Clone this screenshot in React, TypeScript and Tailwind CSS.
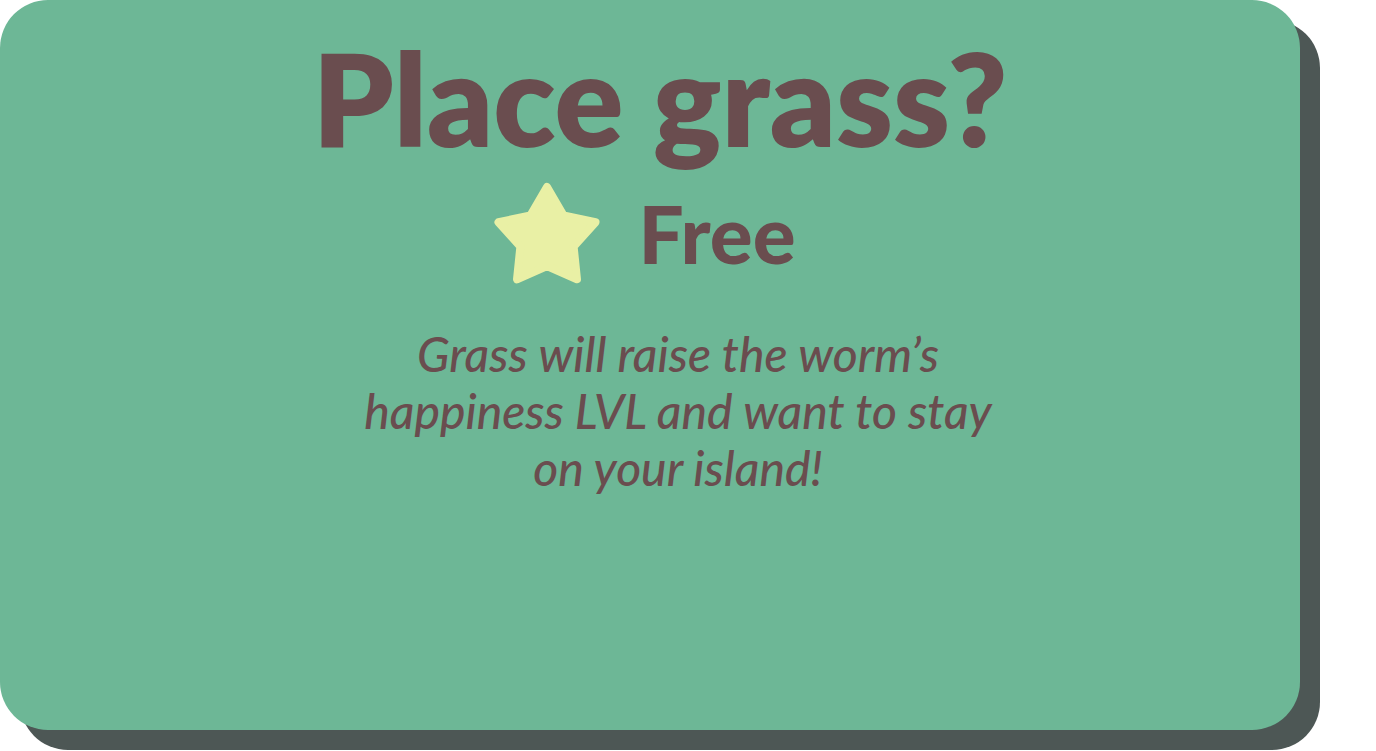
import React from "react";

function starPoints(cx: number, cy: number, outer: number, inner: number): string {
  const pts: string[] = [];
  for (let i = 0; i < 10; i++) {
    const r = i % 2 === 0 ? outer : inner;
    const a = -Math.PI / 2 + (i * Math.PI) / 5;
    pts.push(`${(cx + r * Math.cos(a)).toFixed(2)},${(cy + r * Math.sin(a)).toFixed(2)}`);
  }
  return pts.join(" ");
}

function Star() {
  return (
    <svg aria-hidden width="110" height="104" viewBox="0 0 110 104" className="shrink-0">
      <polygon
        points={starPoints(55, 57, 51, 28)}
        fill="#e9f0a5"
        stroke="#e9f0a5"
        strokeWidth="8"
        strokeLinejoin="round"
      />
    </svg>
  );
}

export default function App() {
  return (
    <main className="min-h-[751px] w-[1376px] bg-white font-['Lato',sans-serif] text-[#6a4d4f]">
      <div className="flex h-[730px] w-[1300px] flex-col rounded-[48px] bg-[#6db796] shadow-[20px_20px_0_#4d5755]">
        <div className="flex w-full justify-center pt-[34px] pl-[20px]">
          <h1 className="text-[128px] font-extrabold leading-none">Place grass?</h1>
        </div>

        <div className="mt-[19px] flex w-full items-center justify-center gap-[36px] pr-[12px]">
          <Star />
          <span className="text-[80px] font-black leading-none">Free</span>
        </div>

        <div className="mt-[40px] flex w-full justify-center pl-[56px]">
          <p className="w-[660px] text-center text-[48px] font-medium italic leading-[57px]">
            Grass will raise the worm&rsquo;s happiness LVL and want to stay on your island!
          </p>
        </div>
      </div>
    </main>
  );
}
